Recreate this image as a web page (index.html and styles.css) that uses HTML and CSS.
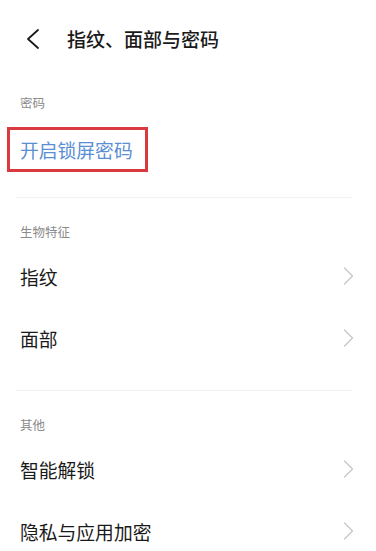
FILE: index.html
```html
<!DOCTYPE html>
<html lang="zh-CN">
<head>
    <meta charset="UTF-8">
    <meta name="viewport" content="width=device-width, initial-scale=1.0">
    <title>指纹、面部与密码</title>
    <link rel="stylesheet" href="styles.css">
</head>
<body>
    <!-- Barre du haut -->
    <div class="header">
        <svg class="back" width="14" height="20" viewBox="0 0 14 20">
            <path d="M12 1 L2 10 L12 19" fill="none" stroke="#1a1a1a" stroke-width="1.8" stroke-linecap="round" stroke-linejoin="round"/>
        </svg>
        <h1>指纹、面部与密码</h1>
    </div>

    <!-- Section mot de passe -->
    <div class="section first">
        <div class="label">密码</div>
        <div class="highlight">开启锁屏密码</div>
    </div>
    <div class="divider"></div>

    <!-- Section biométrie -->
    <div class="section">
        <div class="label">生物特征</div>
        <div class="row">
            <span>指纹</span>
            <svg class="arrow" width="11" height="18" viewBox="0 0 11 18"><path d="M1.5 1 L9.5 9 L1.5 17" /></svg>
        </div>
        <div class="row">
            <span>面部</span>
            <svg class="arrow" width="11" height="18" viewBox="0 0 11 18"><path d="M1.5 1 L9.5 9 L1.5 17" /></svg>
        </div>
    </div>
    <div class="divider small"></div>

    <!-- Section autres -->
    <div class="section">
        <div class="label">其他</div>
        <div class="row">
            <span>智能解锁</span>
            <svg class="arrow" width="11" height="18" viewBox="0 0 11 18"><path d="M1.5 1 L9.5 9 L1.5 17" /></svg>
        </div>
        <div class="row">
            <span>隐私与应用加密</span>
            <svg class="arrow" width="11" height="18" viewBox="0 0 11 18"><path d="M1.5 1 L9.5 9 L1.5 17" /></svg>
        </div>
    </div>
</body>
</html>
```

FILE: styles.css
```css
body {
    font-family: "Noto Sans CJK SC", "Noto Sans", sans-serif;
    margin: 0;
    padding: 0;
    background-color: #ffffff;
    color: #1a1a1a;
    overflow: hidden;
}
.header {
    height: 78px;
    display: flex;
    align-items: center;
    padding-left: 26px;
}
.back {
    flex: none;
}
h1 {
    margin: 0 0 0 27px;
    font-size: 19px;
    font-weight: 500;
    line-height: 24px;
    color: #1a1a1a;
}
.section {
    padding: 0 22px 0 20px;
    margin-top: 24px;
}
.section.first {
    margin-top: 15px;
}
.label {
    font-size: 12.5px;
    line-height: 20px;
    color: #8a8a8a;
}
.highlight {
    display: inline-flex;
    align-items: center;
    height: 39px;
    margin: 14px 0 0 -13px;
    padding: 0 12px 0 10px;
    border: 3px solid #d93a3f;
    font-size: 18.8px;
    color: #5b8fd3;
}
.divider {
    height: 1px;
    margin: 25px 24px 0 16px;
    background-color: #f3f3f3;
}
.divider.small {
    margin-top: 21px;
}
.row {
    height: 62px;
    display: flex;
    align-items: center;
    justify-content: space-between;
    font-size: 18.8px;
}
.section .label + .row {
    margin-top: 3px;
}
.arrow {
    flex: none;
}
.arrow path {
    fill: none;
    stroke: #c6c6c6;
    stroke-width: 1.3;
    stroke-linecap: round;
    stroke-linejoin: round;
}
```
